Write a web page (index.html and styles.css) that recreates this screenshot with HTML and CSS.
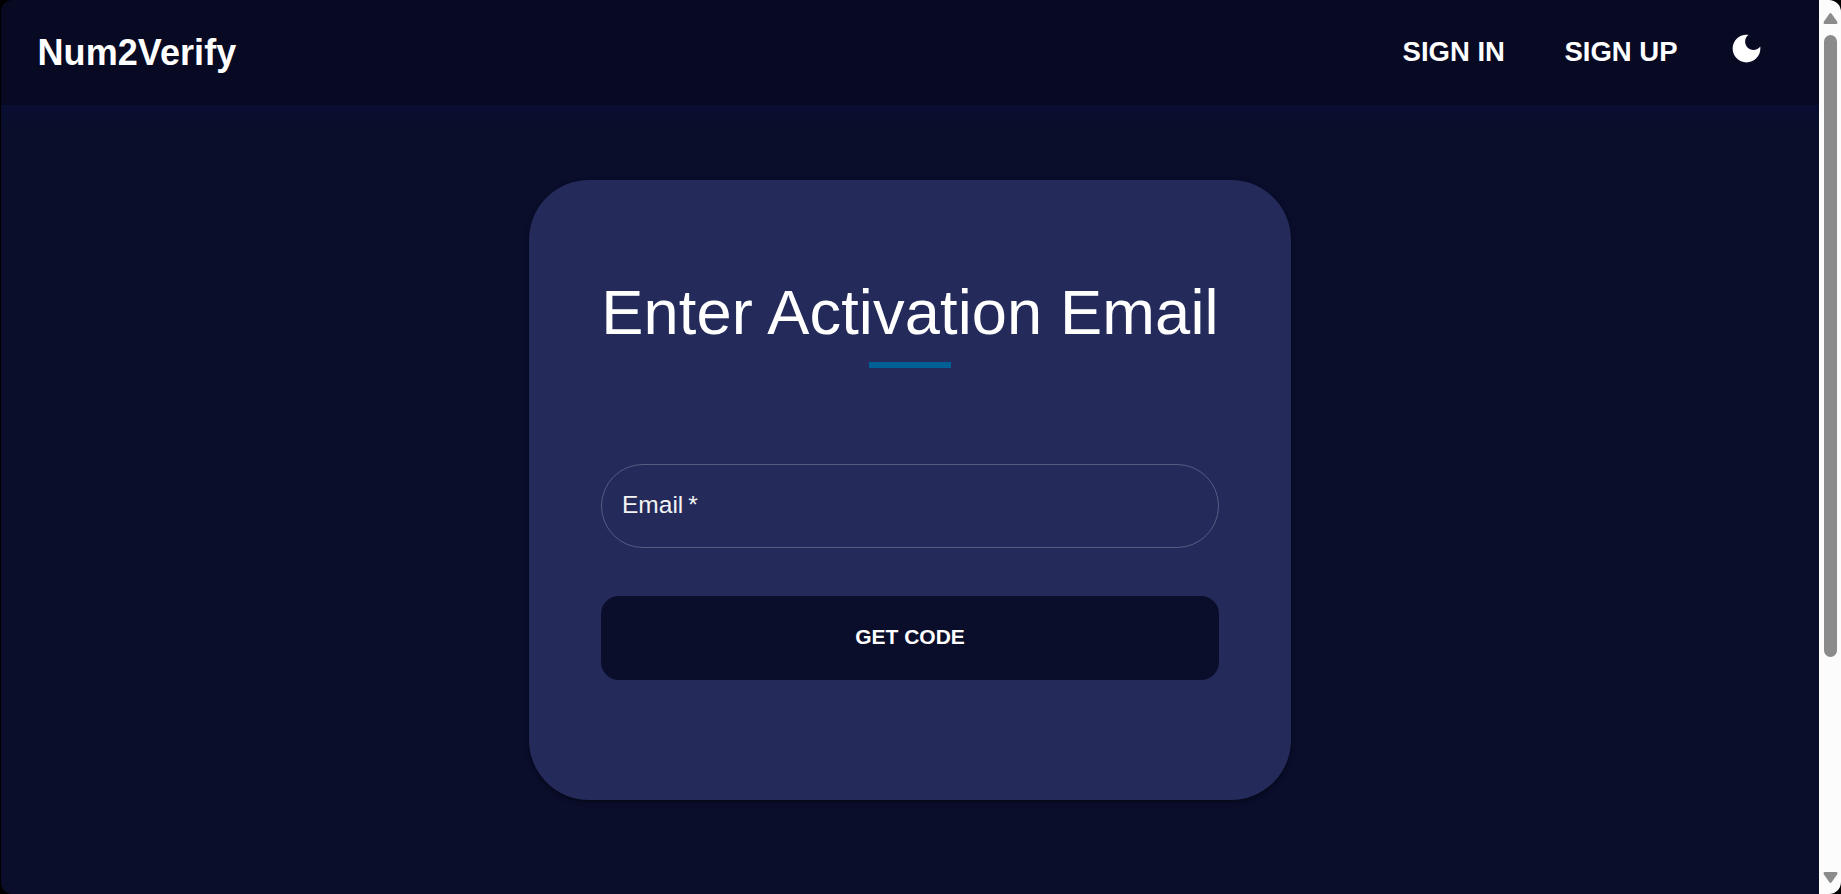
FILE: index.html
```html
<!DOCTYPE html>
<html lang="en">
<head>
<meta charset="utf-8">
<title>Num2Verify</title>
<link rel="stylesheet" href="styles.css">
</head>
<body>
<div class="window">
  <div class="page">
    <header class="header">
      <a class="logo">Num2Verify</a>
      <nav class="nav">
        <a class="nav-link">SIGN IN</a>
        <a class="nav-link">SIGN UP</a>
        <svg class="moon" viewBox="0 0 24 24"><path fill="#fff" d="M12 3c-4.97 0-9 4.03-9 9s4.03 9 9 9 9-4.03 9-9c0-.46-.04-.92-.1-1.36-.98 1.37-2.58 2.26-4.4 2.26-2.98 0-5.4-2.42-5.4-5.4 0-1.81.89-3.42 2.26-4.4-.44-.06-.9-.1-1.36-.1z"/></svg>
      </nav>
    </header>
    <main class="main">
      <form class="card">
        <h1 class="title">Enter Activation Email</h1>
        <div class="bar"></div>
        <label class="field">Email&thinsp;*</label>
        <button class="submit" type="button">GET CODE</button>
      </form>
    </main>
  </div>
  <div class="scrollbar">
    <svg class="arrow" viewBox="0 0 14 11"><path fill="#8b8b8b" d="M5.7 1Q7-.8 8.3 1L13.6 8.6Q14.6 10.9 12.6 11H1.4Q-.6 10.9.4 8.6Z"/></svg>
    <div class="thumb"></div>
    <svg class="arrow arrow-down" viewBox="0 0 14 11"><path fill="#8b8b8b" d="M5.7 10Q7 11.8 8.3 10L13.6 2.4Q14.6.1 12.6 0H1.4Q-.6.1.4 2.4Z"/></svg>
  </div>
</div>
</body>
</html>
```

FILE: styles.css
```css
* { box-sizing: border-box; }
body {
  margin: 0;
  height: 894px;
  padding-left: 1px;
  overflow: hidden;
  background: #000;
  color: #fff;
  font-family: "Liberation Sans", Arial, sans-serif;
}
.window {
  display: flex;
  height: 894px;
  border-radius: 12px;
  overflow: hidden;
}
.page {
  flex: 1;
  display: flex;
  flex-direction: column;
  background: #0a0e2b;
}
.header {
  height: 105px;
  display: flex;
  justify-content: space-between;
  align-items: flex-start;
  padding: 0 54.5px 0 36.5px;
  background: #080a23;
}
.logo {
  margin-top: 32px;
  font-size: 36px;
  line-height: 42px;
  font-weight: 700;
  letter-spacing: .07px;
}
.nav {
  display: flex;
  align-items: flex-start;
}
.nav-link {
  margin: 36px 59.5px 0 0;
  font-size: 27.5px;
  line-height: 32px;
  font-weight: 700;
}
.nav-link:nth-child(2) { margin-right: 50px; }
.moon {
  width: 37px;
  height: 37px;
  margin-top: 29.5px;
}
.main {
  flex: 1;
  display: flex;
  justify-content: center;
  align-items: flex-start;
  padding-top: 75px;
  background: linear-gradient(#090e32, #0a0e2b 24px);
}
.card {
  width: 762px;
  height: 620px;
  padding: 95px 72px 0;
  display: flex;
  flex-direction: column;
  align-items: center;
  background: #242a5a;
  border-radius: 60px;
  box-shadow: 0 2px 3px rgba(0, 0, 0, .35), 0 1px 6px rgba(0, 0, 0, .15);
}
.title {
  margin: 0;
  font-size: 63.2px;
  line-height: 74px;
  font-weight: 400;
  letter-spacing: .13px;
  white-space: nowrap;
}
.bar {
  width: 82px;
  height: 6px;
  margin: 13px 0 96px;
  background: #006096;
}
.field {
  width: 100%;
  height: 84px;
  padding: 0 20px;
  border: 1px solid #575c82;
  border-radius: 42px;
  color: #f3f3f3;
  font-size: 24.5px;
  line-height: 80px;
}
.submit {
  width: 100%;
  height: 84px;
  margin-top: 48px;
  padding: 0 0 2px;
  border: 0;
  border-radius: 18px;
  background: #0a0e2b;
  color: #fff;
  font: 700 21px "Liberation Sans", Arial, sans-serif;
}
.scrollbar {
  width: 22px;
  padding: 13px 0 11px 1px;
  display: flex;
  flex-direction: column;
  align-items: center;
  background: #fcfcfc;
}
.arrow {
  width: 15px;
  height: 11px;
}
.thumb {
  width: 13px;
  height: 622px;
  margin-top: 11px;
  border-radius: 7px;
  background: #8b8b8b;
}
.arrow-down { margin-top: auto; }
```
